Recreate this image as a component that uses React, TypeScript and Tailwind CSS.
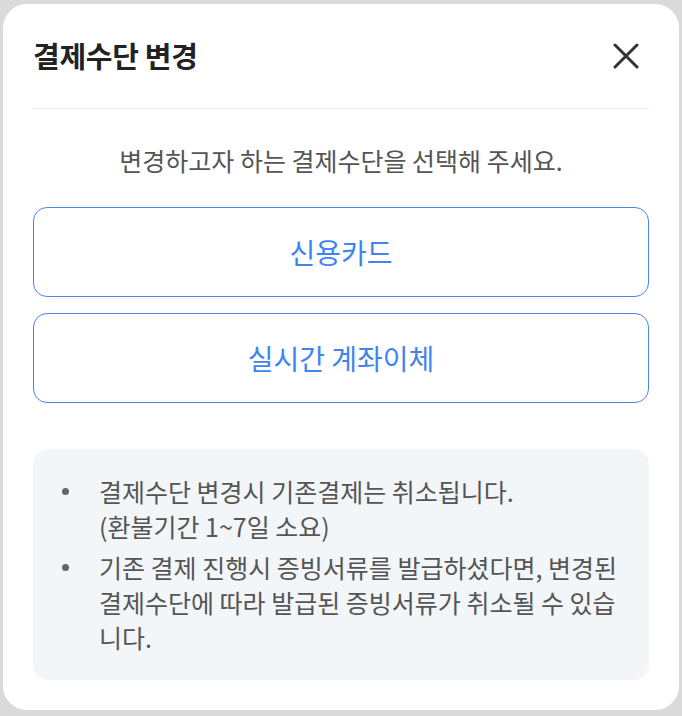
import React from 'react';

const notes = [
  ['결제수단 변경시 기존결제는 취소됩니다.', '(환불기간 1~7일 소요)'],
  ['기존 결제 진행시 증빙서류를 발급하셨다면, 변경된 결제수단에 따라 발급된 증빙서류가 취소될 수 있습니다.'],
];

const methods = ['신용카드', '실시간 계좌이체'];

export default function App() {
  return (
    <div
      className="w-[682px] h-[716px] bg-[#dadada] pt-[4px] px-[3px] overflow-hidden"
      style={{ fontFamily: '"Noto Sans CJK KR", "Noto Sans", sans-serif' }}
    >
      <div className="w-[676px] h-[706px] bg-white rounded-[24px] px-[30px]">
        <div className="h-[105px] flex items-center justify-between border-b border-[#ececec]">
          <h2 className="text-[29px] font-bold text-[#222] tracking-[-0.3px]">결제수단 변경</h2>
          <button className="w-[26px] h-[26px] mr-[10px] text-[#333]">
            <svg viewBox="0 0 26 26" width="26" height="26" fill="none" stroke="currentColor" strokeWidth="3" strokeLinecap="round">
              <path d="M2 2L24 24M24 2L2 24" />
            </svg>
          </button>
        </div>

        <p className="mt-[35px] h-[32px] leading-[32px] text-center text-[25px] text-[#555]">
          변경하고자 하는 결제수단을 선택해 주세요.
        </p>

        <div className="mt-[31px] flex flex-col gap-[16px]">
          {methods.map((m) => (
            <button
              key={m}
              className="h-[90px] w-full rounded-[14px] border border-[#4a87ec] text-[28px] text-[#3f84f0]"
            >
              {m}
            </button>
          ))}
        </div>

        <div className="mt-[46px] bg-[#f3f6f9] rounded-[16px] py-[25px] pl-[29px] pr-[20px]">
          <ul className="flex flex-col gap-[6px]">
            {notes.map((lines, i) => (
              <li key={i} className="flex">
                <span className="w-[37px] shrink-0 pt-[14px]">
                  <span className="block w-[7px] h-[7px] rounded-full bg-[#666]" />
                </span>
                <div className="w-[525px] text-[25px] leading-[35px] text-[#555]">
                  {lines.map((l) => (
                    <div key={l}>{l}</div>
                  ))}
                </div>
              </li>
            ))}
          </ul>
        </div>
      </div>
    </div>
  );
}
